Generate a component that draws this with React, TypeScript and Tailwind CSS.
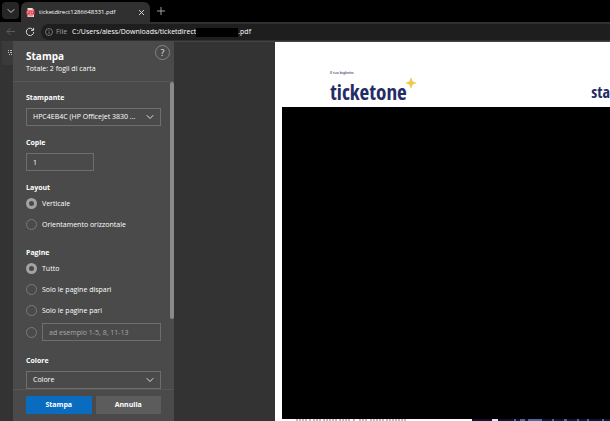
import { useState } from "react";
import type { ReactNode } from "react";

function Chevron({ className }: { className: string }) {
  return (
    <svg viewBox="0 0 10 10" className={className} fill="none" stroke="currentColor" strokeLinecap="round" strokeLinejoin="round">
      <path d="M2 3.5 5 6.5 8 3.5" />
    </svg>
  );
}

function PdfIcon() {
  return (
    <svg viewBox="0 0 9 9" className="size-[9px] shrink-0" aria-hidden="true">
      <path d="M1.5 0h4.8L8 1.8V9H1.5Z" fill="#f3dcdc" />
      <path d="M6.3 0 8 1.8H6.3Z" fill="#b98f8f" />
      <rect x="0" y="2.6" width="9" height="3.9" rx=".8" fill="#d92b34" />
      <path d="M1.6 5.6V3.6h1v.9h-1M4 3.6v2h.5c.9 0 .9-2 0-2ZM6.3 5.6v-2h1.1M6.3 4.6h.9" fill="none" stroke="#fbe3e3" strokeWidth=".5" />
      <path d="M2.5 7.8h4.5" stroke="#d92b34" strokeWidth=".7" />
    </svg>
  );
}

function TabStrip() {
  return (
    <div className="flex h-[22px] shrink-0 items-end bg-black pl-[2px]">
      <button aria-label="Schede" className="mb-[3px] flex h-[17px] w-[17px] items-center justify-center rounded bg-[#262626] text-[#d0d0d0]">
        <Chevron className="size-[10px]" />
      </button>
      <div className="ml-[2px] flex h-[20px] w-[129px] items-center rounded-t-md bg-[#303030] px-[5px]">
        <PdfIcon />
        <span className="ml-1 flex-1 text-[6px] whitespace-nowrap text-white">ticketdirect1286648331.pdf</span>
        <button aria-label="Chiudi scheda" className="text-[#e0e0e0]">
          <svg viewBox="0 0 7 7" className="size-[7px]" stroke="currentColor" strokeWidth=".9">
            <path d="m1 1 5 5M6 1 1 6" />
          </svg>
        </button>
      </div>
      <button aria-label="Nuova scheda" className="mb-[7px] ml-[7px] text-[#b0b0b0]">
        <svg viewBox="0 0 8 8" className="size-2" stroke="currentColor" strokeWidth=".9">
          <path d="M4 0v8M0 4h8" />
        </svg>
      </button>
    </div>
  );
}

function Toolbar() {
  return (
    <div className="flex h-[19px] shrink-0 items-center bg-[#303030] pl-[6px]">
      <button aria-label="Indietro" className="text-[#606060]">
        <svg viewBox="0 0 9 9" className="size-[9px]" fill="none" stroke="currentColor" strokeWidth=".9">
          <path d="M9 4.5H1M4.5 1 1 4.5 4.5 8" />
        </svg>
      </button>
      <button aria-label="Aggiorna" className="ml-[10px] text-[#d8d8d8]">
        <svg viewBox="0 0 10 10" className="size-[10px]" fill="none" stroke="currentColor">
          <path d="M8.2 3A3.7 3.7 0 1 0 8.7 5M8.6.8v2.6H6" />
        </svg>
      </button>
      <div className="ml-[6px] flex h-4 flex-1 items-center rounded-l-full bg-[#1e1e1e] pl-1 text-[7px] whitespace-nowrap text-white">
        <svg viewBox="0 0 8 8" className="size-2" fill="none" stroke="#8c8c8c" strokeWidth=".8" aria-hidden="true">
          <circle cx="4" cy="4" r="3.5" />
          <path d="M4 3.5V6M4 2v.8" />
        </svg>
        <div className="ml-[3px] flex items-center pt-[2px]">
          <span className="w-4 text-[#a0a0a0]">File</span>
          <span>C:/Users/aless/Downloads/ticketdirect</span>
          <span className="h-[9px] w-[42px] bg-black" />
          <span>.pdf</span>
        </div>
      </div>
    </div>
  );
}

const label = "flex h-3 items-center pt-[2px] text-[7px] font-bold text-white";
const box = "block h-[18px] appearance-none rounded-none border border-[#6e6e6e] bg-transparent px-[6px] pt-px text-[7px] text-white outline-none";
const radio = "size-[11px] shrink-0 appearance-none rounded-full border border-[#7a7a7a] checked:border-[3px] checked:border-[#a3a3a3]";

function SelectField({ id, title, value }: { id: string; title: string; value: string }) {
  return (
    <div className="flex flex-col gap-[5px]">
      <label htmlFor={id} className={label}>{title}</label>
      <div className="relative">
        <select id={id} className={`${box} w-full`}>
          <option>{value}</option>
        </select>
        <Chevron className="pointer-events-none absolute top-1 right-[6px] size-[10px] text-[#e0e0e0]" />
      </div>
    </div>
  );
}

function Radio({ name, checked, onPick, children }: { name: string; checked: boolean; onPick: () => void; children: ReactNode }) {
  return (
    <label className="flex h-[21px] items-center gap-[5px] text-[7px] text-white">
      <input type="radio" name={name} checked={checked} onChange={onPick} className={radio} />
      <span className="pt-[2px]">{children}</span>
    </label>
  );
}

function PrintPanel() {
  const [layout, setLayout] = useState(0);
  const [pages, setPages] = useState(0);
  return (
    <form className="flex w-[161px] shrink-0 flex-col bg-[#4a4a4a]" onSubmit={(e) => e.preventDefault()}>
      <header className="flex h-[41px] shrink-0 justify-between border-b border-[#565656] pt-1 pr-1 pl-[13px]">
        <div className="pt-1">
          <h1 className="text-[10px] leading-[14px] font-bold text-white">Stampa</h1>
          <p className="text-[7px] leading-[12px] text-white">Totale: 2 fogli di carta</p>
        </div>
        <button type="button" aria-label="Guida" className="flex size-[15px] items-center justify-center rounded-full border border-[#858585] text-[9px] text-[#e6e6e6]">?</button>
      </header>

      <div className="flex min-h-0 flex-1 overflow-hidden">
        <div className="flex min-w-0 flex-1 flex-col gap-[10px] pt-[9px] pr-[9px] pl-[13px]">
          <SelectField id="printer" title="Stampante" value="HPC4EB4C (HP OfficeJet 3830 ..." />
          <div className="flex flex-col gap-[5px]">
            <label htmlFor="copies" className={label}>Copie</label>
            <input id="copies" defaultValue="1" className={`${box} w-[68px]`} />
          </div>
          <fieldset className="min-w-0 pb-px">
            <legend className={label}>Layout</legend>
            {["Verticale", "Orientamento orizzontale"].map((text, i) => (
              <Radio key={text} name="layout" checked={layout === i} onPick={() => setLayout(i)}>{text}</Radio>
            ))}
          </fieldset>
          <fieldset className="min-w-0 pb-px">
            <legend className={label}>Pagine</legend>
            {["Tutto", "Solo le pagine dispari", "Solo le pagine pari"].map((text, i) => (
              <Radio key={text} name="pages" checked={pages === i} onPick={() => setPages(i)}>{text}</Radio>
            ))}
            <div className="flex h-[22px] items-center gap-[5px]">
              <input
                type="radio"
                name="pages"
                aria-label="Intervallo di pagine"
                checked={pages === 3}
                onChange={() => setPages(3)}
                className={radio}
              />
              <input aria-label="Pagine da stampare" placeholder="ad esempio 1-5, 8, 11-13" className={`${box} min-w-0 flex-1 placeholder:text-[#a8a8a8]`} />
            </div>
          </fieldset>
          <SelectField id="color" title="Colore" value="Colore" />
        </div>
        <div className="w-1 shrink-0">
          <div className="h-[237px] rounded-full bg-[#8a8a8a]" />
        </div>
      </div>

      <footer className="flex h-8 shrink-0 gap-1 border-t border-[#565656] pt-[6px] pr-[13px] pl-[13px] text-[7px] font-bold text-white">
        <button className="h-[18px] flex-1 bg-[#0a6cbf] pt-px">Stampa</button>
        <button type="button" className="h-[18px] flex-1 bg-[#5c5c5c] pt-px">Annulla</button>
      </footer>
    </form>
  );
}

function Ticket() {
  return (
    <article className="flex min-w-0 flex-1 flex-col overflow-hidden bg-white pl-[7px] font-['Open_Sans_Condensed','Open_Sans',sans-serif] text-[#232c66]">
      <div className="flex h-[65px] shrink-0 justify-between pl-12">
        <div className="pt-7">
          <p className="font-['Liberation_Sans',sans-serif] text-[4px] leading-[6px]">Il tuo biglietto</p>
          <div className="flex">
            <span className="pt-1 text-[21px] leading-6 font-bold">ticketone</span>
            <svg viewBox="0 0 12 12" className="mt-px -ml-[2px] size-3" aria-hidden="true">
              <path d="M6 0 7.6 4.4 12 6 7.6 7.6 6 12 4.4 7.6 0 6 4.4 4.4Z" fill="#f2c84b" />
            </svg>
          </div>
        </div>
        <p className="pt-[42px] text-[16px] leading-4 font-bold">sta</p>
      </div>
      <div className="min-h-0 flex-1 bg-black" />
      <div className="flex h-[2px] shrink-0 items-start justify-between overflow-hidden">
        <svg viewBox="0 0 110 2" className="ml-[14px] h-[2px] w-[110px]" aria-hidden="true">
          <path d="M0 1h11M13 1h2M17 1h8M27 1h14M43 1h11M57 1h3M63 1h9M74 1h14M90 1h20" stroke="#777" strokeDasharray="2 1" />
        </svg>
        <svg viewBox="0 0 138 2" className="h-[2px] w-[138px]" aria-hidden="true">
          <path d="M0 0h138v2H0Z" fill="#0b1435" />
          <path d="M20 0h6" stroke="#dfe3ee" strokeWidth="4" />
          <path d="M42 1h2M48 1h5M56 1h14M80 1h2M92 1h3M105 1h2M115 1h2M130 1h2" stroke="#48699f" strokeWidth="2" />
        </svg>
      </div>
    </article>
  );
}

export default function App() {
  return (
    <div className="flex h-screen flex-col overflow-hidden bg-[#333] font-['Open_Sans',sans-serif]">
      <TabStrip />
      <Toolbar />
      <main className="flex min-h-0 flex-1">
        <aside className="w-[13px] shrink-0 pl-[2px]">
          <div className="flex h-6 items-center justify-end bg-[#3a3a3a] pr-px">
            <svg viewBox="0 0 4 6" className="h-[6px] w-1" fill="#bdbdbd" aria-hidden="true">
              <path d="M0 0h1v1H0ZM2 0h2v1H2ZM0 2h1v1H0ZM2 2h2v1H2ZM1 4h1v1H1ZM3 4h1v1H3Z" />
            </svg>
          </div>
        </aside>
        <PrintPanel />
        <section className="flex min-w-0 flex-1 border-t border-[#444] pl-[101px]">
          <Ticket />
        </section>
      </main>
    </div>
  );
}
